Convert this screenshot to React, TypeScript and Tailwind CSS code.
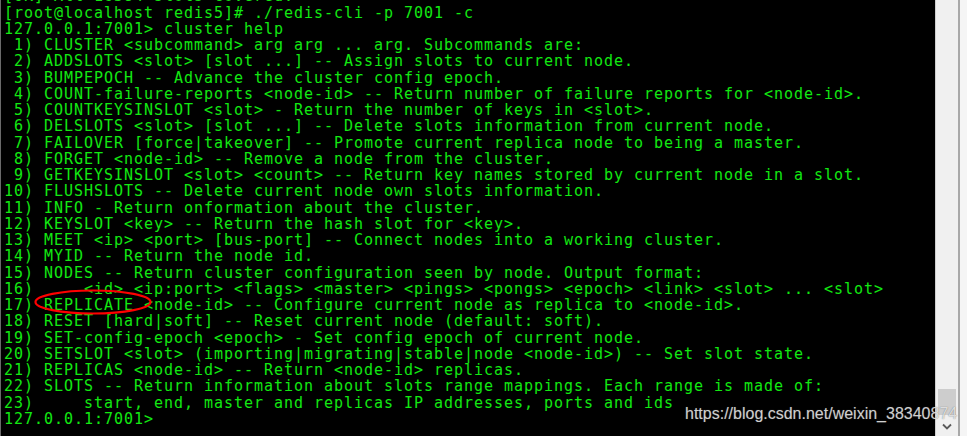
import React from 'react';

const LINES = [
  '[OK] All 16384 slots covered.',
  '[root@localhost redis5]# ./redis-cli -p 7001 -c',
  '127.0.0.1:7001> cluster help',
  ' 1) CLUSTER <subcommand> arg arg ... arg. Subcommands are:',
  ' 2) ADDSLOTS <slot> [slot ...] -- Assign slots to current node.',
  ' 3) BUMPEPOCH -- Advance the cluster config epoch.',
  ' 4) COUNT-failure-reports <node-id> -- Return number of failure reports for <node-id>.',
  ' 5) COUNTKEYSINSLOT <slot> - Return the number of keys in <slot>.',
  ' 6) DELSLOTS <slot> [slot ...] -- Delete slots information from current node.',
  ' 7) FAILOVER [force|takeover] -- Promote current replica node to being a master.',
  ' 8) FORGET <node-id> -- Remove a node from the cluster.',
  ' 9) GETKEYSINSLOT <slot> <count> -- Return key names stored by current node in a slot.',
  '10) FLUSHSLOTS -- Delete current node own slots information.',
  '11) INFO - Return onformation about the cluster.',
  '12) KEYSLOT <key> -- Return the hash slot for <key>.',
  '13) MEET <ip> <port> [bus-port] -- Connect nodes into a working cluster.',
  '14) MYID -- Return the node id.',
  '15) NODES -- Return cluster configuration seen by node. Output format:',
  '16)     <id> <ip:port> <flags> <master> <pings> <pongs> <epoch> <link> <slot> ... <slot>',
  '17) REPLICATE <node-id> -- Configure current node as replica to <node-id>.',
  '18) RESET [hard|soft] -- Reset current node (default: soft).',
  '19) SET-config-epoch <epoch> - Set config epoch of current node.',
  '20) SETSLOT <slot> (importing|migrating|stable|node <node-id>) -- Set slot state.',
  '21) REPLICAS <node-id> -- Return <node-id> replicas.',
  '22) SLOTS -- Return information about slots range mappings. Each range is made of:',
  '23)     start, end, master and replicas IP addresses, ports and ids',
  '127.0.0.1:7001> ',
];

export default function App() {
  return (
    <div className="relative flex h-[436px] w-[967px] overflow-hidden bg-black">
      {/* terminal */}
      <div className="h-full w-[935px] overflow-hidden border-l border-[#6a6a6a] pl-[3px]">
        <div className="-mt-[11.6px] font-['DejaVu_Sans_Mono',monospace] text-[15px] leading-[16.25px] tracking-[0.97px] text-[#12e812]">
          {LINES.map((line, i) => (
            <div key={i} className="whitespace-pre">
              {line}
            </div>
          ))}
        </div>
      </div>

      {/* scrollbar */}
      <div className="flex h-full w-[32px] border-l border-[#cfcfcf] bg-[#f0f0f0]">
        <div className="flex w-[22px] flex-col items-center justify-end pb-[4px]">
          <div className="mb-[8px] h-[26px] w-[18px] bg-[#cdcdcd]" />
          <svg width="10" height="7" viewBox="0 0 10 7" className="mb-[2px]">
            <path d="M1 1.5 L5 5.5 L9 1.5" stroke="#5a5a5a" strokeWidth="1.8" fill="none" />
          </svg>
        </div>
        <div className="w-[2px] bg-[#a8a8a8]" />
        <div className="flex-1 bg-[#f5f5f5]" />
      </div>

      {/* red annotation */}
      <svg className="absolute left-[33px] top-[288px]" width="122" height="28" viewBox="0 0 122 28">
        <ellipse cx="60" cy="14" rx="57.5" ry="11.5" stroke="#ff0000" strokeWidth="2.2" fill="none" />
      </svg>

      {/* watermark */}
      <div className="absolute left-[685px] top-[406px] whitespace-nowrap font-['Liberation_Sans',Arial,sans-serif] text-[16px] leading-none text-white/75 [text-shadow:0_0_1px_rgba(90,90,90,0.9)]">
        https://blog.csdn.net/weixin_38340874
      </div>
    </div>
  );
}
